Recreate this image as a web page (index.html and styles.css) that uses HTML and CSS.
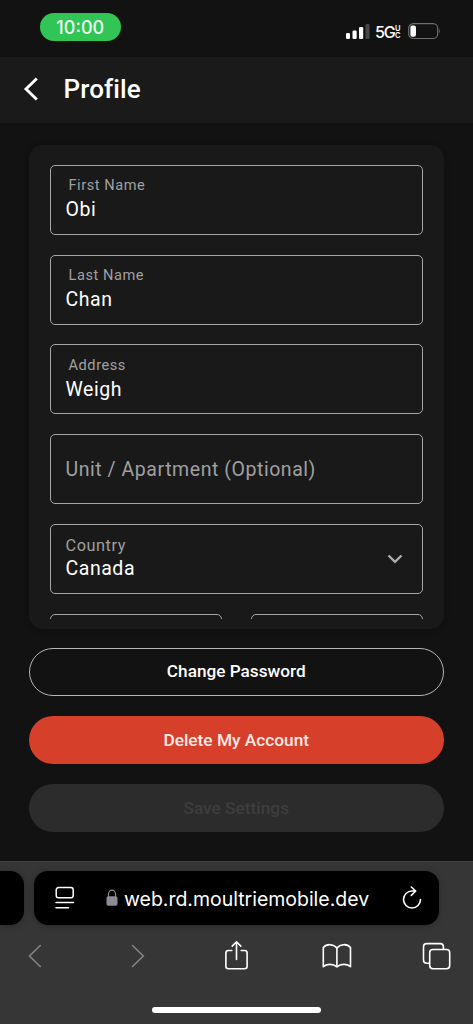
FILE: index.html
```html
<!DOCTYPE html>
<html lang="en">
<head>
<meta charset="utf-8">
<meta name="viewport" content="width=device-width">
<title>Profile</title>
<link rel="stylesheet" href="styles.css">
</head>
<body>
<div class="status">
  <div class="clock">10:00</div>
  <div class="signals">
    <svg class="bars" width="24" height="16" viewBox="0 0 24 16"><rect x="0" y="9" width="4" height="6" rx="1.2" fill="#fff"/><rect x="6.5" y="6.5" width="4.2" height="8.5" rx="1.2" fill="#fff"/><rect x="13" y="3" width="4.2" height="12" rx="1.2" fill="#fff"/><rect x="19.5" y="0" width="4" height="15" rx="1.2" fill="#48484a"/></svg>
    <span class="network">5G</span>
    <span class="uc"><span>U</span><span>C</span></span>
    <svg class="battery" width="33" height="17" viewBox="0 0 33 17"><rect x=".7" y=".7" width="29" height="14.8" rx="4.6" fill="none" stroke="#6d6d6d" stroke-width="1.2"/><rect x="2.4" y="2.5" width="5.6" height="11.2" rx="2" fill="#fff"/><path d="M31.2 5.8q1.6 2.3 0 4.6z" fill="#777"/></svg>
  </div>
</div>
<header class="header">
  <svg width="16" height="24" viewBox="0 0 16 24" fill="none" stroke="#fff" stroke-width="2.9"><path d="M13.800 1.500 3 12l10.800 10.500"/></svg>
  <h1>Profile</h1>
</header>
<main class="main">
  <section class="card">
    <div class="fields">
      <div class="field"><label>First Name</label><span>Obi</span></div>
      <div class="field"><label>Last Name</label><span>Chan</span></div>
      <div class="field"><label>Address</label><span>Weigh</span></div>
      <div class="field empty"><span>Unit / Apartment (Optional)</span></div>
      <div class="field select"><label>Country</label><span>Canada</span>
        <svg class="chevron" width="16" height="10" viewBox="0 0 16 10" fill="none" stroke="#adadad" stroke-width="2.400"><path d="M1.500 1.500 8 7.800 14.500 1.500"/></svg>
      </div>
      <div class="pair"><div class="field"></div><div class="field"></div></div>
    </div>
  </section>
  <button class="button outline">Change Password</button>
  <button class="button danger">Delete My Account</button>
  <button class="button disabled" disabled>Save Settings</button>
</main>
<footer class="browser">
  <div class="tabs">
    <div class="previous"></div>
    <div class="address">
      <svg class="reader" width="20" height="24" viewBox="0 0 20 24" fill="none" stroke="#fff" stroke-width="1.5" stroke-linecap="round"><rect x="1.200" y="1.600" width="17" height="10.200" rx="2.300"/><path d="M1 16.500h17.500M1 21.700h12.500"/></svg>
      <svg class="lock" width="12" height="18" viewBox="0 0 12 18"><rect x=".5" y="7.200" width="11" height="9.500" rx="1.700" fill="#8e8d96"/><path d="M2.500 8V5a3.500 3.800 0 0 1 7 0v3" fill="none" stroke="#8e8d96" stroke-width="1.200"/></svg>
      <span class="url">web.rd.moultriemobile.dev</span>
      <svg class="reload" width="20" height="24" viewBox="0 0 20 24" fill="none" stroke="#fff" stroke-width="1.600" stroke-linecap="round" stroke-linejoin="round"><path d="M18.500 13.500A8.500 8.500 0 1 1 10 5h3.200M9.300 1 13.700 5 9.300 9.400"/></svg>
    </div>
  </div>
  <nav class="tools">
    <svg class="back" width="28" height="32" viewBox="0 0 28 32" fill="none" stroke="#848484" stroke-width="1.600" stroke-linecap="round"><path d="M19.300 5.500 8.500 16 19.300 26.500"/></svg>
    <svg width="28" height="32" viewBox="0 0 28 32" fill="none" stroke="#848484" stroke-width="1.600" stroke-linecap="round"><path d="M9.500 5.500 20.300 16 9.500 26.500"/></svg>
    <svg width="28" height="32" viewBox="0 0 28 32" fill="none" stroke="#fff" stroke-width="1.600" stroke-linecap="round" stroke-linejoin="round"><path d="M9.800 10.500H6.400a2.500 2.500 0 0 0-2.500 2.500v13.300a2.500 2.500 0 0 0 2.500 2.500h16.200a2.500 2.500 0 0 0 2.500-2.500V13a2.500 2.500 0 0 0-2.500-2.500h-3.400M14.500 19.500V2M10.200 6.100l4.300-4.300 4.300 4.300"/></svg>
    <svg class="book" width="32" height="32" viewBox="0 0 32 32" fill="none" stroke="#fff" stroke-width="1.600" stroke-linejoin="round"><path d="M15.900 8C12.100 3.700 5.700 3.600 2.300 7.500v19.200c4-3.200 9.600-3 13.600.2 4-3.200 9.600-3.400 13.600-.2V7.500C26.100 3.600 19.700 3.700 15.900 8z"/><path d="M15.900 8v19"/></svg>
    <svg width="32" height="32" viewBox="0 0 32 32" fill="none" stroke="#fff" stroke-width="1.600"><path d="M9 23.200H6.700a3.200 3.200 0 0 1-3.200-3.200V6.800a3.200 3.200 0 0 1 3.200-3.200h13.500a3.200 3.200 0 0 1 3.200 3.200V9"/><rect x="9.700" y="9.500" width="20" height="19.300" rx="3.200"/></svg>
  </nav>
  <div class="home"></div>
</footer>
</body>
</html>
```
FILE: styles.css
```css
* { box-sizing: border-box; }
body { margin: 0; width: 473px; height: 1024px; overflow: hidden; background: #121212; color: #fff; font-family: Roboto, sans-serif; display: flex; flex-direction: column; }
svg { display: block; flex: none; }
.status { height: 57px; flex: none; padding: 13px 32px 0 40px; display: flex; justify-content: space-between; align-items: flex-start; }
.clock { width: 80.500px; height: 28px; border-radius: 14px; background: #30c554; color: #effff2; text-align: center; font: 500 18px/29px Inter, sans-serif; letter-spacing: 0; }
.signals { display: flex; padding-top: 10px; }
.bars { margin-top: 1px; }
.network { width: 20px; margin-left: 5px; font: 500 16px/19px Inter, sans-serif; letter-spacing: -1.200px; white-space: nowrap; }
.uc { display: flex; flex-direction: column; width: 6px; margin: 2px 7px 0 0; font: 600 7.500px/7px Inter, sans-serif; }
.header { height: 66px; flex: none; background: #1a1a1a; display: flex; align-items: center; padding: 0 23px 2px; }
.header h1 { margin: 0 0 0 24.500px; font-size: 26px; line-height: 32px; font-weight: 500; letter-spacing: .1px; }
.main { height: 738px; flex: none; padding: 21.500px 29.500px 0 29px; }
.card { height: 484px; border-radius: 14px; background: #191919; padding: 20.300px 20.500px 9px 21px; box-shadow: 0 1px 5px #0b0b0b66; }
.fields { height: 454.700px; overflow: hidden; display: flex; flex-direction: column; gap: 19.750px; }
.field { height: 70px; flex: none; border: 1px solid #a6a6a6; border-radius: 5px; padding: 9.700px 14.500px 8.500px; display: flex; flex-direction: column; position: relative; letter-spacing: .55px; }
.field label { margin-left: 3px; height: 22px; color: #a0a0a0; font-size: 14.600px; line-height: 21px; }
.field span { font-size: 19.500px; line-height: 26px; }
.field.empty { justify-content: center; color: #a0a0a0; }
.select label { margin-left: 0; font-size: 16.300px; line-height: 23px; }
.select span { line-height: 25px; }
.chevron { position: absolute; right: 19px; top: 29.500px; }
.pair { display: grid; grid-template-columns: 1fr 1fr; gap: 29px; flex: none; }
.button { display: block; width: 100%; height: 48px; margin: 20px 0 0; border: 0; border-radius: 24px; padding: 0; font: 500 17.300px/48px Roboto, sans-serif; letter-spacing: 0; color: #fff; text-align: center; }
.outline { border: 1px solid #b5b5b5; background: transparent; margin-top: 19.500px; padding-bottom: 2px; font-size: 17.200px; line-height: 44px; }
.danger { background: #d6402b; color: #ffe9e5; }
.disabled { background: #2c2c2c; color: #3d3d3d; }
.browser { height: 163px; flex: none; background: #363636; border-top: 1px solid #424242; display: flex; flex-direction: column; }
.tabs { display: flex; gap: 10px; height: 54px; margin-top: 9px; }
.previous { width: 24px; background: #000; border-radius: 0 14px 14px 0; box-shadow: 0 1px 6px #00000040; }
.address { width: 405px; background: #000; border-radius: 14px; display: flex; align-items: center; padding: 0 17px 0 20.500px; box-shadow: 0 1px 6px #00000040; }
.lock { margin-left: 31.500px; }
.url { width: 245px; margin-left: 6px; padding-top: 1px; font: 400 19.500px/26px Inter, sans-serif; letter-spacing: -.020px; white-space: nowrap; }
.reload { margin-left: auto; }
.tools { display: flex; justify-content: space-between; padding: 0 21px; margin-top: 15px; height: 32px; }
.back { margin-right: 3.500px; }
.book { margin-right: -3.500px; }
.home { width: 169px; height: 6px; margin: 35px auto 0; border-radius: 3px; background: #fff; }
```
